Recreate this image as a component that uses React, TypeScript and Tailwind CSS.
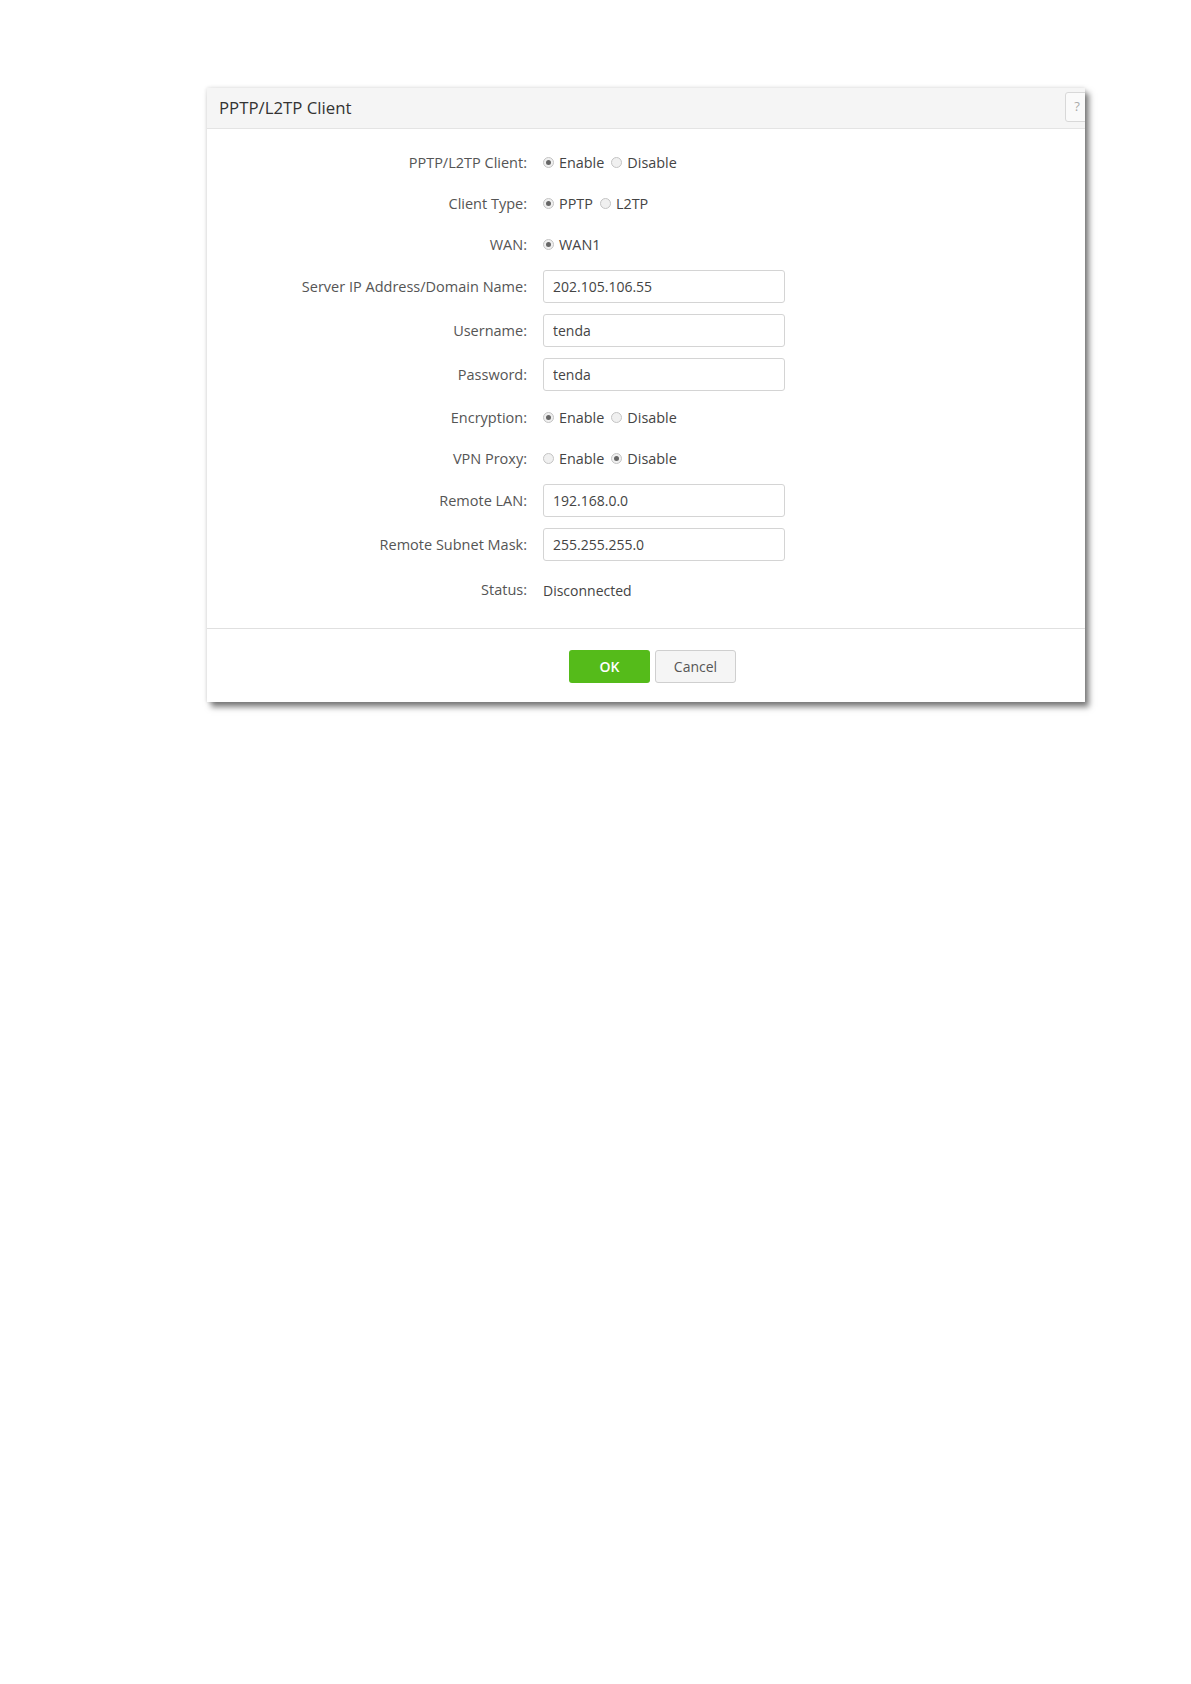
import { useState } from "react";

const FONT = { fontFamily: '"Open Sans", "Noto Sans", sans-serif' };

function Radio({ checked, label, onClick }: { checked: boolean; label: string; onClick: () => void }) {
  return (
    <label className="flex cursor-pointer items-center gap-[5px]" onClick={onClick}>
      <span className="flex h-[11px] w-[11px] items-center justify-center rounded-full border border-[#c4c4c4] bg-[#f0f0f0]">
        {checked && <span className="h-[5px] w-[5px] rounded-full bg-[#666]" />}
      </span>
      <span className="text-[14.4px] text-[#444]">{label}</span>
    </label>
  );
}

function Row({ label, kind = "radio", children }: { label: string; kind?: "radio" | "input" | "status"; children: React.ReactNode }) {
  const height = kind === "input" ? "h-[33px]" : kind === "status" ? "h-[34px] pt-[2px]" : "h-[30px] pt-[2px]";
  return (
    <div className={`flex items-center ${height}`}>
      <div className="w-[320px] shrink-0 text-right text-[14.5px] text-[#555]">{label}</div>
      <div className="ml-[16px] flex items-center gap-[7px]">{children}</div>
    </div>
  );
}

function TextInput({ value }: { value: string }) {
  return (
    <input
      defaultValue={value}
      className="h-[33px] w-[242px] rounded-[3px] border border-[#d4d4d4] px-[9px] text-[14px] text-[#444] outline-none"
      style={FONT}
    />
  );
}

export default function App() {
  const [client, setClient] = useState(true);
  const [pptp, setPptp] = useState(true);
  const [encrypt, setEncrypt] = useState(true);
  const [proxy, setProxy] = useState(false);

  return (
    <div className="min-h-[1684px] bg-white pt-[88px]" style={FONT}>
      <div className="ml-[207px] w-[878px] overflow-hidden bg-white shadow-[0_0_4px_rgba(0,0,0,0.15),4px_5px_6px_rgba(0,0,0,0.5)]">
        <div className="flex h-[41px] items-center justify-between border-b border-[#e4e4e4] bg-[#f5f5f5] pl-[12px]">
          <span className="text-[16.8px] text-[#333]">PPTP/L2TP Client</span>
          <span className="mr-[-10px] mt-[-3px] flex h-[30px] w-[30px] items-center justify-center rounded-[3px] border border-[#d8d8d8] bg-[#fafafa] pr-[6px] text-[13px] text-[#aaa]">
            ?
          </span>
        </div>

        <div className="flex flex-col gap-[11px] pt-[18px] pb-[22px]">
          <Row label="PPTP/L2TP Client:">
            <Radio checked={client} label="Enable" onClick={() => setClient(true)} />
            <Radio checked={!client} label="Disable" onClick={() => setClient(false)} />
          </Row>
          <Row label="Client Type:">
            <Radio checked={pptp} label="PPTP" onClick={() => setPptp(true)} />
            <Radio checked={!pptp} label="L2TP" onClick={() => setPptp(false)} />
          </Row>
          <Row label="WAN:">
            <Radio checked label="WAN1" onClick={() => {}} />
          </Row>
          <Row label="Server IP Address/Domain Name:" kind="input">
            <TextInput value="202.105.106.55" />
          </Row>
          <Row label="Username:" kind="input">
            <TextInput value="tenda" />
          </Row>
          <Row label="Password:" kind="input">
            <TextInput value="tenda" />
          </Row>
          <Row label="Encryption:">
            <Radio checked={encrypt} label="Enable" onClick={() => setEncrypt(true)} />
            <Radio checked={!encrypt} label="Disable" onClick={() => setEncrypt(false)} />
          </Row>
          <Row label="VPN Proxy:">
            <Radio checked={proxy} label="Enable" onClick={() => setProxy(true)} />
            <Radio checked={!proxy} label="Disable" onClick={() => setProxy(false)} />
          </Row>
          <Row label="Remote LAN:" kind="input">
            <TextInput value="192.168.0.0" />
          </Row>
          <Row label="Remote Subnet Mask:" kind="input">
            <TextInput value="255.255.255.0" />
          </Row>
          <Row label="Status:" kind="status">
            <span className="text-[14px] text-[#444]">Disconnected</span>
          </Row>
        </div>

        <div className="flex justify-center gap-[5px] border-t border-[#e0e0e0] pt-[21px] pb-[19px] pl-[13px]">
          <button className="h-[33px] w-[81px] rounded-[3px] bg-[#55bb1a] text-[14px] font-semibold text-white">
            OK
          </button>
          <button className="h-[33px] w-[81px] rounded-[3px] border border-[#cfcfcf] bg-[#f5f5f5] text-[14px] text-[#555]">
            Cancel
          </button>
        </div>
      </div>
    </div>
  );
}
